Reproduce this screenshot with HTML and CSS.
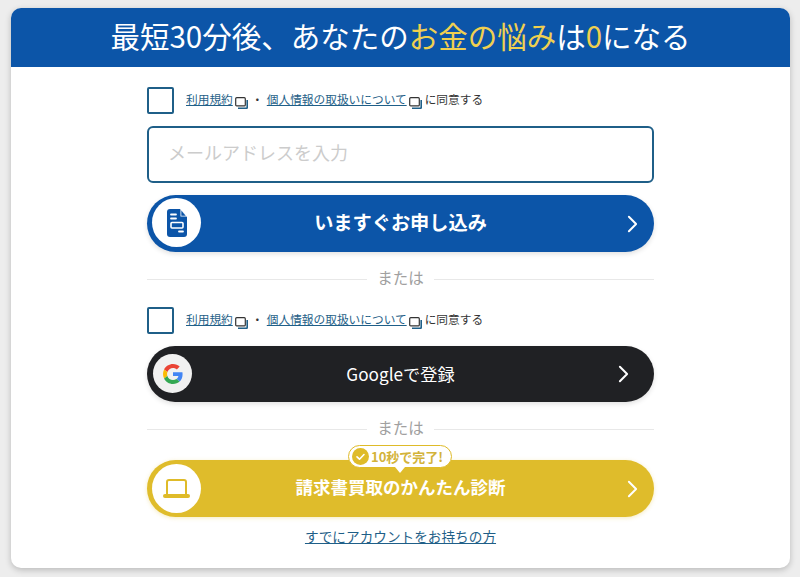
FILE: index.html
```html
<!DOCTYPE html>
<html lang="ja">

	<head>
		<meta charset="UTF-8">
		<title>お申し込み</title>
		<link rel="stylesheet" href="styles.css">
	</head>

	<body>
		<svg class="defs" width="0" height="0">
			<symbol id="ext" viewBox="0 0 13 12">
				<rect x="0.7" y="0.7" width="9.6" height="8.2" rx="1" fill="#fff" stroke="#333" stroke-width="1.2"/>
				<path d="M12.2 3v7.6a.8.8 0 0 1-.8.8H3" fill="none" stroke="#1f5f88" stroke-width="1.6"/>
			</symbol>
			<symbol id="chev" viewBox="0 0 12 20">
				<path d="M2 2l8 8-8 8" fill="none" stroke="#fff" stroke-width="2.2" stroke-linecap="round" stroke-linejoin="round"/>
			</symbol>
		</svg>
		<div class="card">
			<h1 class="title">最短30分後、あなたの<em>お金の悩み</em>は<em>0</em>になる</h1>
			<div class="body">
				<div class="form">
					<div class="agree">
						<span class="check"></span>
						<a href="#">利用規約</a><svg class="ext"><use href="#ext"/></svg>
						<span class="dot">・</span>
						<a href="#">個人情報の取扱いについて</a><svg class="ext"><use href="#ext"/></svg>
						<span class="agree-end">に同意する</span>
					</div>
					<div class="mail">メールアドレスを入力</div>
					<a href="#" class="btn btn-blue">
						<span class="btn-icon">
							<svg width="20" height="28" viewBox="0 0 20 28">
								<path d="M3 0h10l7 8v17a3 3 0 0 1-3 3H3a3 3 0 0 1-3-3V3a3 3 0 0 1 3-3z" fill="#0c55a8"/>
								<path d="M13.500 0l6.500 7.500h-6.500z" fill="#fff"/>
								<path d="M14.300 1.500l4.400 5.200h-4.400z" fill="#0c55a8"/>
								<path d="M4 5.500h5M4 9.500h5M12 22.500h4" stroke="#fff" stroke-width="1.800" stroke-linecap="round"/>
								<rect x="4" y="13.500" width="12" height="5.500" rx="1" fill="none" stroke="#fff" stroke-width="1.600"/>
							</svg>
						</span>
						<span class="btn-text">いますぐお申し込み</span>
						<svg class="chev"><use href="#chev"/></svg>
					</a>
					<div class="or">または</div>
					<div class="agree">
						<span class="check"></span>
						<a href="#">利用規約</a><svg class="ext"><use href="#ext"/></svg>
						<span class="dot">・</span>
						<a href="#">個人情報の取扱いについて</a><svg class="ext"><use href="#ext"/></svg>
						<span class="agree-end">に同意する</span>
					</div>
					<a href="#" class="btn btn-google">
						<span class="btn-icon">
							<svg width="20" height="20" viewBox="0 0 48 48">
								<path fill="#EA4335" d="M24 9.500c3.540 0 6.710 1.220 9.210 3.600l6.850-6.850C35.900 2.380 30.470 0 24 0 14.620 0 6.510 5.380 2.560 13.220l7.980 6.190C12.430 13.720 17.740 9.500 24 9.500z"/>
								<path fill="#4285F4" d="M46.980 24.550c0-1.570-.15-3.090-.38-4.550H24v9.020h12.940c-.58 2.960-2.260 5.480-4.780 7.180l7.730 6c4.510-4.180 7.090-10.360 7.090-17.650z"/>
								<path fill="#FBBC05" d="M10.530 28.590c-.48-1.450-.76-2.990-.76-4.590s.27-3.140.76-4.590l-7.980-6.190C.92 16.460 0 20.120 0 24c0 3.880.92 7.540 2.560 10.780l7.970-6.190z"/>
								<path fill="#34A853" d="M24 48c6.480 0 11.930-2.130 15.890-5.810l-7.730-6c-2.150 1.450-4.920 2.300-8.160 2.300-6.260 0-11.570-4.220-13.470-9.910l-7.980 6.190C6.510 42.620 14.620 48 24 48z"/>
							</svg>
						</span>
						<span class="btn-text">Googleで登録</span>
						<svg class="chev"><use href="#chev"/></svg>
					</a>
					<div class="or or-tight">または</div>
					<a href="#" class="btn btn-gold">
						<span class="badge">
							<svg width="17" height="17" viewBox="0 0 17 17">
								<circle cx="8.500" cy="8.500" r="8.500" fill="#dfbb29"/>
								<path d="M5 8.800l2.500 2.400L12 6.500" fill="none" stroke="#fff" stroke-width="1.600" stroke-linecap="round" stroke-linejoin="round"/>
							</svg>
							10秒で完了!
						</span>
						<span class="btn-icon">
							<svg width="27" height="19" viewBox="0 0 27 19">
								<path d="M4 15V3a2 2 0 0 1 2-2h15a2 2 0 0 1 2 2v12" fill="none" stroke="#dfbb29" stroke-width="2"/>
								<rect x="0" y="15" width="27" height="4" rx="2" fill="#dfbb29"/>
							</svg>
						</span>
						<span class="btn-text">請求書買取のかんたん診断</span>
						<svg class="chev"><use href="#chev"/></svg>
					</a>
					<a href="#" class="login">すでにアカウントをお持ちの方</a>
				</div>
			</div>
		</div>
	</body>

</html>
```

FILE: styles.css
```css
* {
	box-sizing: border-box;
}

html, body {
	height: 100%;
}

body {
	margin: 0;
	padding: 8px 10px 9px 11px;
	background: #ededed;
	font-family: "Noto Sans CJK JP", "Noto Sans", sans-serif;
	overflow: hidden;
}

a {
	color: #1f5f88;
}

.defs {
	position: absolute;
}

.card {
	height: 560px;
	background: #fff;
	border-radius: 10px;
	box-shadow: 0 2px 6px rgba(0, 0, 0, .22);
	overflow: hidden;
}

.title {
	margin: 0;
	height: 59px;
	background: #0c55a8;
	color: #fff;
	font-size: 29.500px;
	font-weight: 400;
	line-height: 55px;
	text-align: center;
}

.title em {
	font-style: normal;
	color: #f0d050;
}

.body {
	display: flex;
	justify-content: center;
	padding-top: 20px;
}

.form {
	width: 507px;
	display: flex;
	flex-direction: column;
}

.agree {
	display: flex;
	align-items: center;
	height: 27px;
	font-size: 11.700px;
	line-height: 16px;
	color: #333;
	white-space: nowrap;
}

.agree a, .agree-end, .dot {
	margin-top: -4px;
}

.check {
	width: 27px;
	height: 27px;
	margin-right: 12px;
	border: 2px solid #1f5f88;
	border-radius: 2px;
}

.ext {
	width: 13px;
	height: 12px;
	margin: 4px 0 0 2px;
}

.dot {
	width: 19px;
	text-align: center;
}

.agree-end {
	margin-left: 3px;
}

.mail {
	margin-top: 12px;
	height: 57px;
	padding-left: 19px;
	border: 2px solid #1f5f88;
	border-radius: 6px;
	color: #ccc;
	font-size: 18px;
	line-height: 48px;
}

.btn {
	position: relative;
	display: flex;
	align-items: center;
	justify-content: center;
	height: 57px;
	border-radius: 29px;
	color: #fff;
	text-decoration: none;
	box-shadow: 0 2px 5px rgba(0, 0, 0, .12);
}

.btn-text {
	margin-top: -4px;
	font-size: 19.200px;
	font-weight: 700;
}

.btn-blue {
	margin-top: 12px;
	background: #0c55a8;
}

.btn-google {
	margin-top: 12px;
	height: 56px;
	background: #202124;
}

.btn-google .btn-text {
	margin-top: -2px;
	font-size: 17.200px;
	font-weight: 400;
}

.btn-gold {
	margin-top: 23px;
	background: #dfbc2b;
	box-shadow: 0 1px 4px rgba(223, 187, 41, .3);
}

.btn-gold .btn-text {
	font-size: 17.500px;
}

/* round white icon holder at the left end of each button */
.btn-icon {
	position: absolute;
	left: 5px;
	top: 3px;
	width: 49px;
	height: 49px;
	display: flex;
	align-items: center;
	justify-content: center;
	border-radius: 50%;
	background: #fff;
}

.btn-gold .btn-icon {
	top: 4px;
}

.btn-google .btn-icon {
	left: 6px;
	top: 8px;
	width: 39px;
	height: 39px;
	background: #f1f1f1;
}

.chev {
	position: absolute;
	right: 16px;
	top: 20px;
	width: 11px;
	height: 18px;
}

.btn-google .chev {
	right: 25px;
	top: 19px;
}

.or {
	display: flex;
	align-items: center;
	gap: 10px;
	margin-top: 15px;
	height: 20px;
	margin-bottom: 20px;
	color: #a0a0a0;
	font-size: 15.500px;
	line-height: 20px;
}

.or::before, .or::after {
	content: "";
	flex: 1;
	height: 1px;
	margin-top: 4px;
	background: #e8e8e8;
}

.or-tight {
	margin-bottom: 0;
}

.badge {
	position: absolute;
	left: 201px;
	top: -15px;
	z-index: 1;
	display: flex;
	align-items: center;
	gap: 2px;
	height: 23px;
	padding: 0 8px 0 3px;
	border: 1px solid #dfbb29;
	border-radius: 12px;
	background: #fff;
	color: #d3b33a;
	font-size: 13px;
	font-weight: 700;
	white-space: nowrap;
}

.badge::after {
	content: "";
	position: absolute;
	left: 46px;
	bottom: -6px;
	border: 5px solid transparent;
	border-bottom-width: 0;
	border-top: 6px solid #fff;
}

.login {
	margin-top: 10px;
	font-size: 13.650px;
	line-height: 18px;
	text-align: center;
}
```
